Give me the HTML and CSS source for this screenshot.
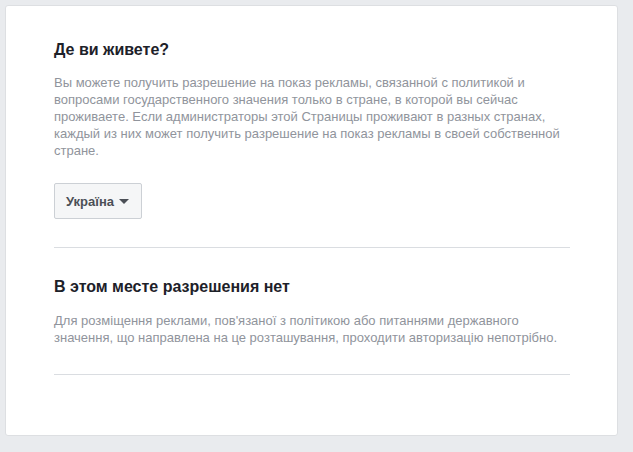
FILE: index.html
```html
<!DOCTYPE html>
<html lang="ru">
<head>
<meta charset="utf-8">
<link rel="stylesheet" href="styles.css">
</head>
<body>
<div class="card">
  <section class="block">
    <h2 class="title">Де ви живете?</h2>
    <p class="text">Вы можете получить разрешение на показ рекламы, связанной с политикой и вопросами государственного значения только в стране, в которой вы сейчас проживаете. Если администраторы этой Страницы проживают в разных странах, каждый из них может получить разрешение на показ рекламы в своей собственной стране.</p>
    <button class="select">Україна <span class="caret"></span></button>
  </section>
  <section class="block second">
    <h2 class="title">В этом месте разрешения нет</h2>
    <p class="text text-tight">Для розміщення реклами, пов'язаної з політикою або питаннями державного значення, що направлена на це розташування, проходити авторизацію непотрібно.</p>
  </section>
</div>
</body>
</html>
```
FILE: styles.css
```css
html, body {
  margin: 0;
  padding: 0;
  background: #e9ebee;
  font-family: "Liberation Sans", Arial, sans-serif;
}
.card {
  box-sizing: border-box;
  width: 613px;
  height: 431px;
  margin: 5px 0 0 5px;
  background: #fff;
  border: 1px solid #dddfe2;
  border-radius: 3px;
  padding: 34px 47px 0 48px;
}
.block {
  border-bottom: 1px solid #dadde1;
  padding-bottom: 28px;
}
.second {
  padding-top: 29px;
  padding-bottom: 28px;
}
.title {
  margin: 0;
  font-size: 16px;
  line-height: 20px;
  font-weight: bold;
  color: #1d2129;
}
.text {
  margin: 14px 0 0 0;
  font-size: 13px;
  line-height: 17px;
  color: #90949c;
}
.text-tight {
  margin-top: 15px;
}
.select {
  display: flex;
  align-items: center;
  gap: 5px;
  box-sizing: border-box;
  height: 36px;
  margin-top: 24px;
  padding: 0 12px 0 11px;
  background: #f5f6f7;
  border: 1px solid #ccd0d5;
  border-radius: 2px;
  font-family: "Liberation Sans", Arial, sans-serif;
  font-size: 13px;
  font-weight: bold;
  color: #4b4f56;
}
.caret {
  width: 0;
  height: 0;
  border-left: 5px solid transparent;
  border-right: 5px solid transparent;
  border-top: 5px solid #4b4f56;
  margin-top: 1px;
}
```
